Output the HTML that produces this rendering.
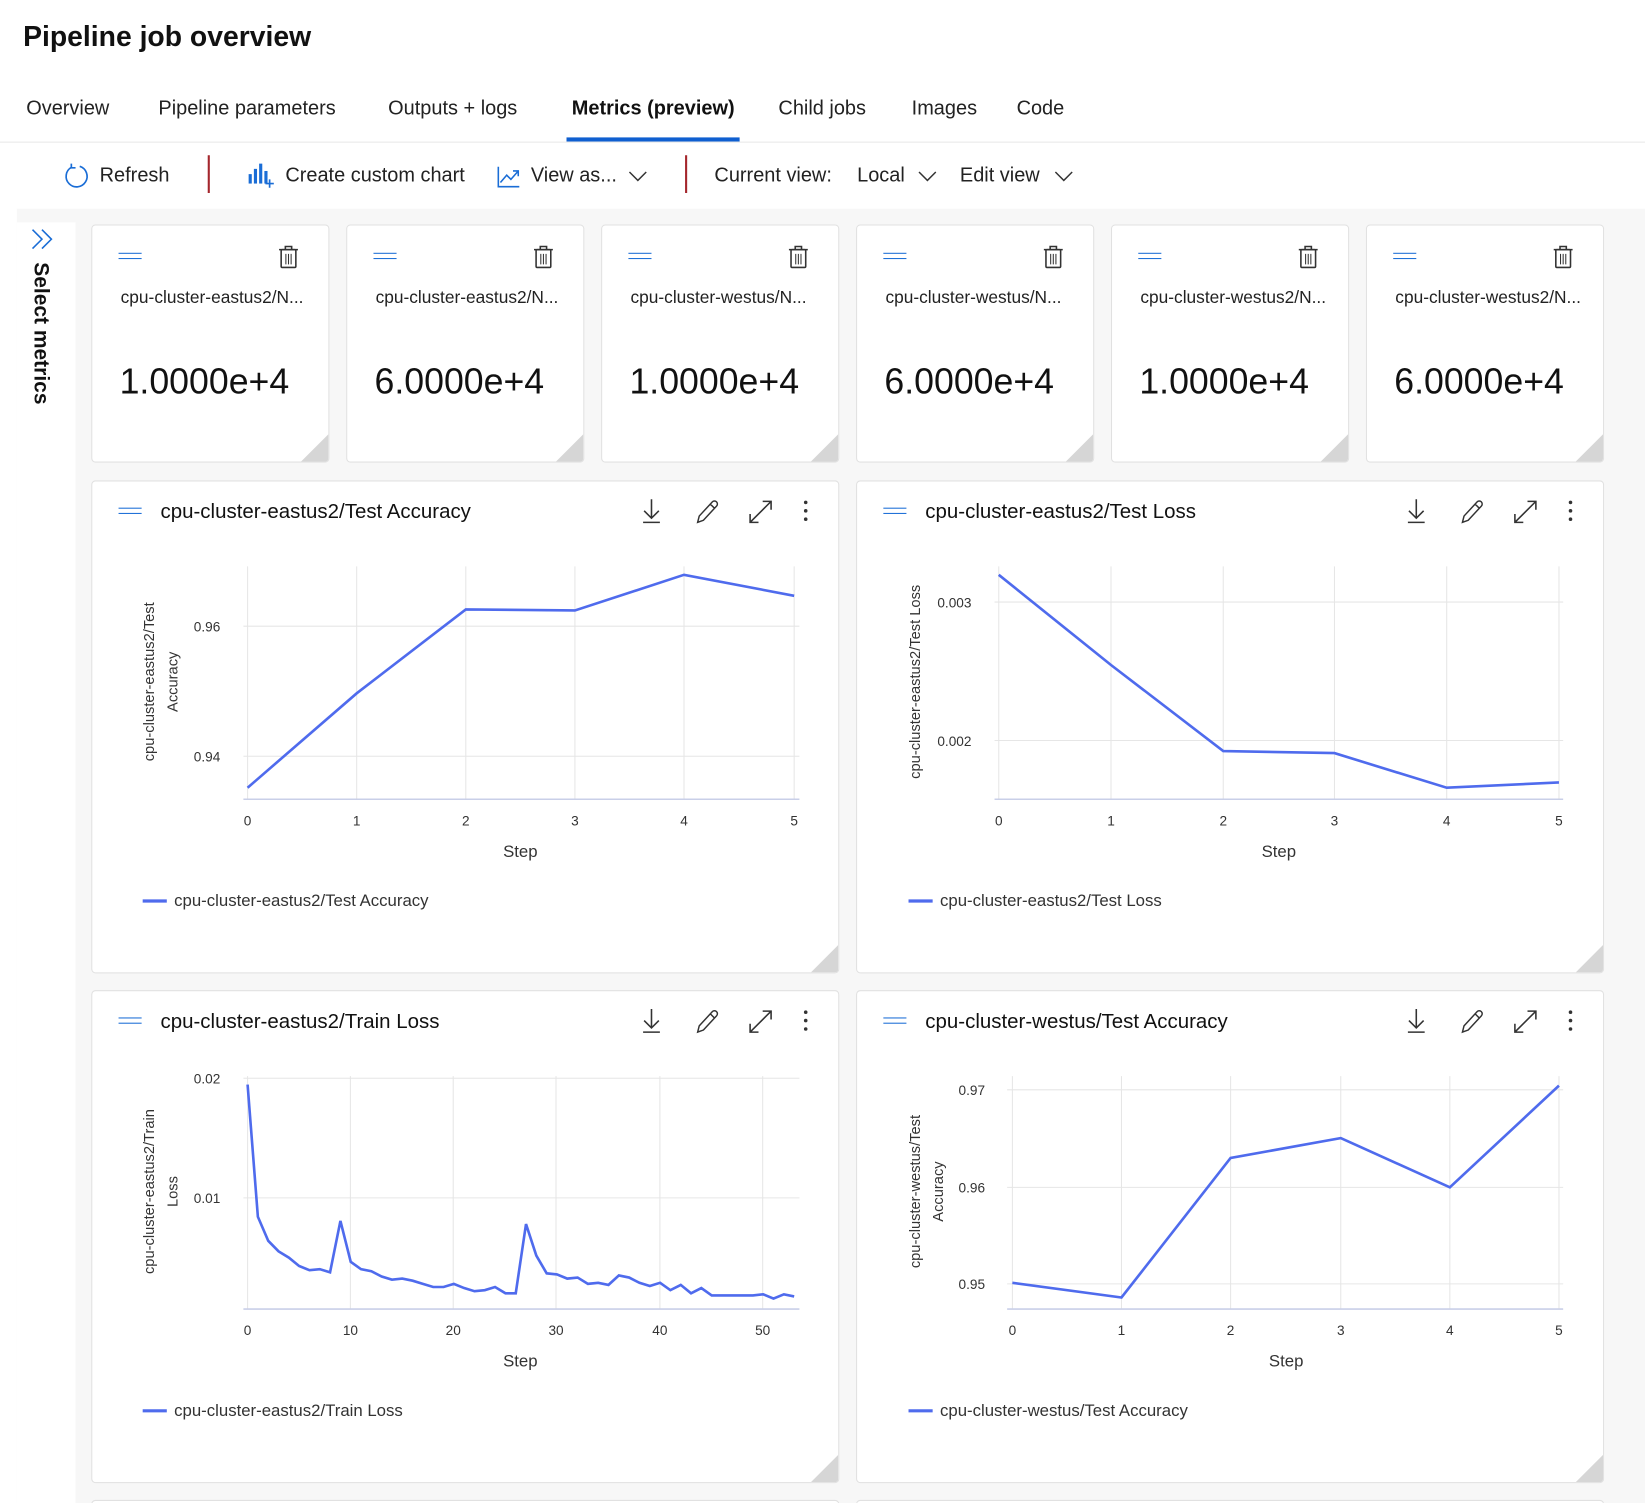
<!DOCTYPE html>
<html><head><meta charset="utf-8"><style>
*{margin:0;padding:0;box-sizing:border-box}
html,body{width:1645px;height:1503px;overflow:hidden;background:#fff}
#clip{position:absolute;left:0;top:0;width:1645px;height:1503px;overflow:hidden}
#w{position:absolute;left:0;top:0;width:1568px;height:1433px;overflow:hidden;transform:scale(1.0491,1.0489);transform-origin:0 0;font-family:"Liberation Sans",sans-serif;color:#111}
.a{position:absolute;white-space:nowrap}
.tab{position:absolute;top:93px;font-size:19px;color:#222}
.tb{position:absolute;top:157px;font-size:19px;color:#222}
.sc{position:absolute;top:214px;width:227px;height:227px;background:#fff;border:1px solid #e1e1e1;border-radius:4px;overflow:hidden}
.bc{position:absolute;width:713px;height:470px;background:#fff;border:1px solid #e1e1e1;border-radius:4px;overflow:hidden}
.tri{position:absolute;right:0;bottom:0;width:0;height:0;border-left:26px solid transparent;border-bottom:26px solid #d6d6d6}
.ham{position:absolute;width:22px;height:6px;border-top:1.6px solid #1a6dd6;border-bottom:1.6px solid #1a6dd6}
</style></head><body><div id="clip"><div id="w">
<div class="a" style="left:22px;top:20px;font-size:27px;font-weight:600">Pipeline job overview</div>
<div class="tab" style="left:25px">Overview</div>
<div class="tab" style="left:151px">Pipeline parameters</div>
<div class="tab" style="left:370px">Outputs + logs</div>
<div class="tab" style="left:545px;font-weight:600;color:#111">Metrics (preview)</div>
<div class="tab" style="left:742px">Child jobs</div>
<div class="tab" style="left:869px">Images</div>
<div class="tab" style="left:969px">Code</div>
<div class="a" style="left:540px;top:131px;width:165px;height:4px;background:#0f5fd0"></div>
<div class="a" style="left:0;top:135px;width:1568px;height:1px;background:#e8e8e8"></div>

<svg class="a" style="left:60px;top:155px" width="26" height="26" viewBox="0 0 26 26"><path d="M8 4.5A10 10 0 1 0 16 3.6" fill="none" stroke="#1a6dd6" stroke-width="1.6"/><path d="M8 1v4h4" fill="none" stroke="#1a6dd6" stroke-width="1.6"/></svg>
<div class="tb" style="left:95px">Refresh</div>
<div class="a" style="left:198px;top:148px;width:2px;height:36px;background:#a4262c"></div>
<svg class="a" style="left:236px;top:155px" width="26" height="26"><rect x="1" y="11" width="3" height="9" fill="#1a6dd6"/><rect x="6" y="6" width="3" height="14" fill="#1a6dd6"/><rect x="11" y="1" width="3" height="19" fill="#1a6dd6"/><rect x="16" y="8" width="3" height="12" fill="#1a6dd6"/><path d="M21 16v8M17 20h8" stroke="#1a6dd6" stroke-width="1.6"/></svg>
<div class="tb" style="left:272px">Create custom chart</div>
<svg class="a" style="left:473px;top:157px" width="24" height="24"><path d="M2 2v19h20" fill="none" stroke="#1a6dd6" stroke-width="1.5"/><path d="M4 17l6-7 4 4 7-8M16 6h5v5" fill="none" stroke="#1a6dd6" stroke-width="1.5"/></svg>
<div class="tb" style="left:506px">View as...</div>
<svg class="a" style="left:599px;top:162px" width="18" height="12"><path d="M1 2l8 8 8-8" fill="none" stroke="#333" stroke-width="1.4"/></svg>
<div class="a" style="left:653px;top:148px;width:2px;height:36px;background:#a4262c"></div>
<div class="tb" style="left:681px">Current view:</div>
<div class="tb" style="left:817px">Local</div>
<svg class="a" style="left:875px;top:162px" width="18" height="12"><path d="M1 2l8 8 8-8" fill="none" stroke="#333" stroke-width="1.4"/></svg>
<div class="tb" style="left:915px">Edit view</div>
<svg class="a" style="left:1005px;top:162px" width="18" height="12"><path d="M1 2l8 8 8-8" fill="none" stroke="#333" stroke-width="1.4"/></svg>

<div class="a" style="left:16px;top:199px;width:1552px;height:1234px;background:#f7f7f7"></div>
<div class="a" style="left:16px;top:212px;width:56px;height:1221px;background:#fff"></div>
<svg class="a" style="left:28px;top:216px" width="26" height="26"><path d="M3 3l9 9-9 9M12 3l9 9-9 9" fill="none" stroke="#1a6dd6" stroke-width="1.5"/></svg>
<div class="a" style="left:26px;top:250px;font-size:20px;font-weight:600;transform-origin:0 0;transform:translate(24px,0) rotate(90deg)">Select metrics</div>

<div id="smalls"></div>
<script>
var xs=[87,330,573,816,1059,1302],lb=["cpu-cluster-eastus2/N...","cpu-cluster-eastus2/N...","cpu-cluster-westus/N...","cpu-cluster-westus/N...","cpu-cluster-westus2/N...","cpu-cluster-westus2/N..."],vs=["1.0000e+4","6.0000e+4","1.0000e+4","6.0000e+4","1.0000e+4","6.0000e+4"],h="";
for(var i=0;i<6;i++){h+='<div class="sc" style="left:'+xs[i]+'px"><div class="ham" style="left:25px;top:26px"></div><svg class="a" style="left:176px;top:18px" width="22" height="24"><path d="M2 5h18M8 5V2h6v3" fill="none" stroke="#333" stroke-width="1.5"/><rect x="4" y="5" width="14" height="17" rx="1" fill="none" stroke="#333" stroke-width="1.5"/><path d="M8.5 9v10M11 9v10M13.5 9v10" stroke="#333" stroke-width="1"/></svg><div class="a" style="left:27px;top:60px;font-size:16.5px;color:#222">'+lb[i]+'</div><div class="a" style="left:26px;top:130px;font-size:34px;font-weight:500">'+vs[i]+'</div><div class="tri"></div></div>';}
document.getElementById("smalls").innerHTML=h;
</script>

<div class="bc" style="left:87px;top:458px"><div class="tri"></div></div>
<div class="bc" style="left:816px;top:458px"><div class="tri"></div></div>
<div class="bc" style="left:87px;top:944px"><div class="tri"></div></div>
<div class="bc" style="left:816px;top:944px"><div class="tri"></div></div>
<div class="bc" style="left:87px;top:1430px;height:10px"></div>
<div class="bc" style="left:816px;top:1430px;height:10px"></div>

<svg class="a" style="left:0;top:0" width="1568" height="1433" font-family="Liberation Sans, sans-serif">
<g stroke="#e6e6e6" stroke-width="1"><path d="M236 540V762M340 540V762M444 540V762M548 540V762M652 540V762M757 540V762M232 597H762M232 721H762"/></g>
<path d="M232 762H762" stroke="#c9cfe8" stroke-width="1.5"/>
<polyline points="236,751 340,661 444,581 548,582 652,548 757,568" fill="none" stroke="#4f6bed" stroke-width="2.5"/>
<g font-size="13" fill="#333" text-anchor="middle"><text x="236" y="787">0</text><text x="340" y="787">1</text><text x="444" y="787">2</text><text x="548" y="787">3</text><text x="652" y="787">4</text><text x="757" y="787">5</text></g>
<g font-size="13" fill="#333" text-anchor="end"><text x="210" y="602">0.96</text><text x="210" y="726">0.94</text></g>
<text x="496" y="817" font-size="16" fill="#333" text-anchor="middle">Step</text>
<g font-size="14" fill="#333" text-anchor="middle"><text transform="translate(147,650) rotate(-90)">cpu-cluster-eastus2/Test</text><text transform="translate(169,650) rotate(-90)">Accuracy</text></g>
<path d="M136 859H159" stroke="#4f6bed" stroke-width="3"/><text x="166" y="864" font-size="16" fill="#333">cpu-cluster-eastus2/Test Accuracy</text>
<g stroke="#e6e6e6"><path d="M952 540V762M1059 540V762M1166 540V762M1272 540V762M1379 540V762M1486 540V762M948 574H1490M948 706H1490"/></g>
<path d="M948 762H1490" stroke="#c9cfe8" stroke-width="1.5"/>
<polyline points="952,548 1059,634 1166,716 1272,718 1379,751 1486,746" fill="none" stroke="#4f6bed" stroke-width="2.5"/>
<g font-size="13" fill="#333" text-anchor="middle"><text x="952" y="787">0</text><text x="1059" y="787">1</text><text x="1166" y="787">2</text><text x="1272" y="787">3</text><text x="1379" y="787">4</text><text x="1486" y="787">5</text></g>
<g font-size="13" fill="#333" text-anchor="end"><text x="926" y="579">0.003</text><text x="926" y="711">0.002</text></g>
<text x="1219" y="817" font-size="16" fill="#333" text-anchor="middle">Step</text>
<text transform="translate(877,650) rotate(-90)" font-size="14" fill="#333" text-anchor="middle">cpu-cluster-eastus2/Test Loss</text>
<path d="M866 859H889" stroke="#4f6bed" stroke-width="3"/><text x="896" y="864" font-size="16" fill="#333">cpu-cluster-eastus2/Test Loss</text>
<g stroke="#e6e6e6"><path d="M236 1026V1248M334 1026V1248M432 1026V1248M530 1026V1248M629 1026V1248M727 1026V1248M232 1028H762M232 1142H762"/></g>
<path d="M232 1248H762" stroke="#c9cfe8" stroke-width="1.5"/>
<polyline id="p3" fill="none" stroke="#4f6bed" stroke-width="2.5"/>
<g font-size="13" fill="#333" text-anchor="middle"><text x="236" y="1273">0</text><text x="334" y="1273">10</text><text x="432" y="1273">20</text><text x="530" y="1273">30</text><text x="629" y="1273">40</text><text x="727" y="1273">50</text></g>
<g font-size="13" fill="#333" text-anchor="end"><text x="210" y="1033">0.02</text><text x="210" y="1147">0.01</text></g>
<text x="496" y="1303" font-size="16" fill="#333" text-anchor="middle">Step</text>
<g font-size="14" fill="#333" text-anchor="middle"><text transform="translate(147,1136) rotate(-90)">cpu-cluster-eastus2/Train</text><text transform="translate(169,1136) rotate(-90)">Loss</text></g>
<path d="M136 1345H159" stroke="#4f6bed" stroke-width="3"/><text x="166" y="1350" font-size="16" fill="#333">cpu-cluster-eastus2/Train Loss</text>
<g stroke="#e6e6e6"><path d="M965 1026V1248M1069 1026V1248M1173 1026V1248M1278 1026V1248M1382 1026V1248M1486 1026V1248M960 1039H1490M960 1132H1490M960 1224H1490"/></g>
<path d="M960 1248H1490" stroke="#c9cfe8" stroke-width="1.5"/>
<polyline points="965,1223 1069,1237 1173,1104 1278,1085 1382,1132 1486,1035" fill="none" stroke="#4f6bed" stroke-width="2.5"/>
<g font-size="13" fill="#333" text-anchor="middle"><text x="965" y="1273">0</text><text x="1069" y="1273">1</text><text x="1173" y="1273">2</text><text x="1278" y="1273">3</text><text x="1382" y="1273">4</text><text x="1486" y="1273">5</text></g>
<g font-size="13" fill="#333" text-anchor="end"><text x="939" y="1044">0.97</text><text x="939" y="1137">0.96</text><text x="939" y="1229">0.95</text></g>
<text x="1226" y="1303" font-size="16" fill="#333" text-anchor="middle">Step</text>
<g font-size="14" fill="#333" text-anchor="middle"><text transform="translate(877,1136) rotate(-90)">cpu-cluster-westus/Test</text><text transform="translate(899,1136) rotate(-90)">Accuracy</text></g>
<path d="M866 1345H889" stroke="#4f6bed" stroke-width="3"/><text x="896" y="1350" font-size="16" fill="#333">cpu-cluster-westus/Test Accuracy</text>
</svg>
<div id="hd"></div>
<script>
var v=[1034,1160,1183,1193,1199,1207,1211,1210,1213,1164,1203,1210,1212,1217,1220,1219,1221,1224,1227,1227,1224,1228,1231,1230,1227,1233,1233,1167,1197,1214,1215,1219,1218,1224,1223,1225,1216,1218,1223,1226,1223,1230,1225,1233,1228,1235,1235,1235,1235,1235,1234,1238,1234,1236],s="";
for(var i=0;i<v.length;i++)s+=(236+i*9.83).toFixed(1)+","+v[i]+" ";
document.getElementById("p3").setAttribute("points",s);
var C=[[87,458,"cpu-cluster-eastus2/Test Accuracy"],[816,458,"cpu-cluster-eastus2/Test Loss"],[87,944,"cpu-cluster-eastus2/Train Loss"],[816,944,"cpu-cluster-westus/Test Accuracy"]],h="";
var ic='<path d="M12 2v17M5 13l7 7 7-7M4 24h16" fill="none" stroke="#333" stroke-width="1.5"/>';
for(var i=0;i<4;i++){var x=C[i][0],y=C[i][1];
h+='<div class="ham" style="left:'+(x+26)+'px;top:'+(y+26)+'px"></div><div class="a" style="left:'+(x+66)+'px;top:'+(y+19)+'px;font-size:19.5px;font-weight:500">'+C[i][2]+'</div>';
h+='<svg class="a" style="left:'+(x+522)+'px;top:'+(y+16)+'px" width="26" height="28">'+ic+'</svg>';
h+='<svg class="a" style="left:'+(x+574)+'px;top:'+(y+16)+'px" width="26" height="28"><path d="M4 24l1.5-6L18 4.5a2.5 2.5 0 0 1 4 4L9.5 22Z M16 6.5l4 4" fill="none" stroke="#333" stroke-width="1.4"/></svg>';
h+='<svg class="a" style="left:'+(x+625)+'px;top:'+(y+16)+'px" width="26" height="28"><path d="M3 24L23 4M15 4h8v8M3 16v8h8" fill="none" stroke="#333" stroke-width="1.5"/></svg>';
h+='<svg class="a" style="left:'+(x+676)+'px;top:'+(y+16)+'px" width="12" height="28"><circle cx="5" cy="5" r="1.7" fill="#333"/><circle cx="5" cy="13" r="1.7" fill="#333"/><circle cx="5" cy="21" r="1.7" fill="#333"/></svg>';}
document.getElementById("hd").innerHTML=h;
</script>
</div></div></body></html>
